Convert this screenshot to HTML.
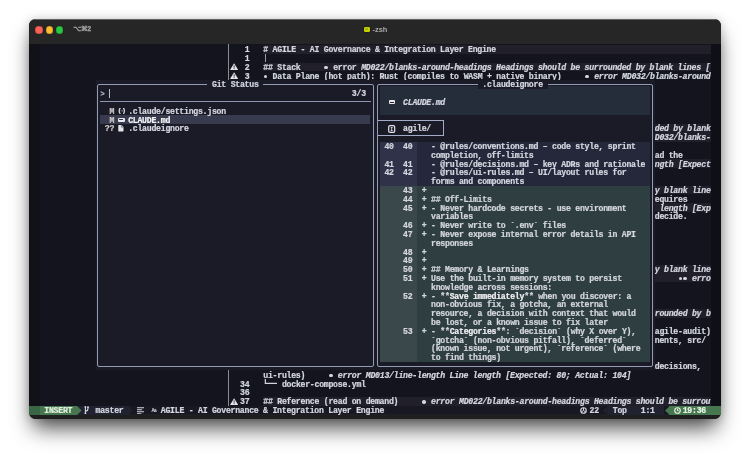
<!DOCTYPE html>
<html lang="en"><head><meta charset="utf-8"><title>-zsh</title>
<style>
html,body{margin:0;padding:0;background:#fff;}
body{width:750px;height:458px;position:relative;overflow:hidden;}
.win{position:absolute;left:29.2px;top:19.4px;width:691.6px;height:399.4px;border-radius:6.5px;background:#13141d;overflow:hidden;}
.shadow{position:absolute;left:29.2px;top:19.4px;width:691.6px;height:399.4px;border-radius:6.5px;box-shadow:0 0 10px rgba(0,0,0,0.17),0 12.5px 21px -4px rgba(0,0,0,0.7);}
.page{will-change:transform;position:absolute;left:-29.2px;top:-19.4px;width:750px;height:458px;}
.tb{position:absolute;left:0;top:0;width:750px;height:44.4px;background:#262627;}
.r{position:absolute;display:block;}
.t{position:absolute;white-space:pre;font-family:"Liberation Mono","DejaVu Sans Mono",monospace;font-size:8.2px;letter-spacing:-0.2608px;line-height:8.8px;height:8.8px;color:#d4d6e0;font-weight:bold;-webkit-text-stroke:0.22px currentColor;}
.i{font-style:italic;}
.b{font-weight:bold;}
.tl{position:absolute;width:7.6px;height:7.6px;border-radius:50%;top:26.2px;box-shadow:inset 0 0 0 0.5px rgba(0,0,0,0.28);}
.ui{position:absolute;font-family:"Liberation Sans","DejaVu Sans",sans-serif;white-space:pre;}
</style></head><body>
<div class="shadow"></div>
<div class="win"><div class="page">
<div class="tb"></div>
<div class="r" style="left:0;top:19.4px;width:750px;height:0.7px;background:rgba(255,255,255,0.28)"></div>
<div class="tl" style="left:35.1px;background:#fe5f57"></div>
<div class="tl" style="left:45.5px;background:#febc2e"></div>
<div class="tl" style="left:55.9px;background:#28c840"></div>
<span class="ui" style="left:73.2px;top:25.3px;font-size:7.1px;line-height:9px;color:#a6a6a6;font-weight:bold;letter-spacing:-0.3px;-webkit-text-stroke:0.25px #a6a6a6">⌥⌘2</span>
<div class="r" style="left:363.6px;top:26.9px;width:6.4px;height:5.2px;border-radius:1.2px;background:#c4d300;box-shadow:0 0 0 0.5px #1a1d00"></div>
<div class="r" style="left:365px;top:28.2px;width:3px;height:1.4px;border-radius:0.4px;background:#a2b000"></div>
<span class="ui" style="left:372.4px;top:25.3px;font-size:7.5px;line-height:9px;color:#a9a9a9;font-weight:bold">-zsh</span>
<div class="r" style="left:263.30px;top:44.90px;width:447.36px;height:8.80px;background:#201f2a;"></div>
<div class="r" style="left:263.30px;top:62.50px;width:447.36px;height:8.80px;background:#201f2a;"></div>
<div class="r" style="left:263.30px;top:124.10px;width:447.36px;height:8.80px;background:#201f2a;"></div>
<div class="r" style="left:263.30px;top:132.90px;width:447.36px;height:8.80px;background:#201f2a;"></div>
<div class="r" style="left:263.30px;top:159.30px;width:447.36px;height:8.80px;background:#201f2a;"></div>
<div class="r" style="left:263.30px;top:185.70px;width:447.36px;height:8.80px;background:#201f2a;"></div>
<div class="r" style="left:263.30px;top:203.30px;width:447.36px;height:8.80px;background:#201f2a;"></div>
<div class="r" style="left:263.30px;top:264.90px;width:447.36px;height:8.80px;background:#201f2a;"></div>
<div class="r" style="left:263.30px;top:273.70px;width:447.36px;height:8.80px;background:#201f2a;"></div>
<div class="r" style="left:263.30px;top:308.90px;width:447.36px;height:8.80px;background:#201f2a;"></div>
<div class="r" style="left:263.30px;top:396.90px;width:447.36px;height:8.80px;background:#201f2a;"></div>
<div class="r" style="left:29.00px;top:44.40px;width:10.62px;height:361.30px;background:#111117;"></div>
<div class="r" style="left:710.66px;top:44.40px;width:10.34px;height:361.30px;background:#0f1017;"></div>
<div class="r" style="left:227.80px;top:44.40px;width:1.10px;height:361.30px;background:#8a8c98;"></div>
<svg class="r" style="left:230.08px;top:63.40px" width="8.2" height="7" viewBox="0 0 76 66"><path d="M38 2 L74 62 Q75 65 72 65 L4 65 Q1 65 2 62 Z" fill="#e4e4ea"/><rect x="34" y="22" width="8" height="22" fill="#13141d"/><rect x="34" y="49" width="8" height="8" fill="#13141d"/></svg>
<svg class="r" style="left:230.08px;top:72.20px" width="8.2" height="7" viewBox="0 0 76 66"><path d="M38 2 L74 62 Q75 65 72 65 L4 65 Q1 65 2 62 Z" fill="#e4e4ea"/><rect x="34" y="22" width="8" height="22" fill="#13141d"/><rect x="34" y="49" width="8" height="8" fill="#13141d"/></svg>
<svg class="r" style="left:230.08px;top:397.80px" width="8.2" height="7" viewBox="0 0 76 66"><path d="M38 2 L74 62 Q75 65 72 65 L4 65 Q1 65 2 62 Z" fill="#e4e4ea"/><rect x="34" y="22" width="8" height="22" fill="#13141d"/><rect x="34" y="49" width="8" height="8" fill="#13141d"/></svg>
<span class="t " style="left:244.66px;top:46.20px;">1</span>
<span class="t " style="left:244.66px;top:55.00px;">1</span>
<span class="t " style="left:244.66px;top:63.80px;">2</span>
<span class="t " style="left:244.66px;top:72.60px;">3</span>
<span class="t " style="left:240.00px;top:380.60px;">34</span>
<span class="t " style="left:240.00px;top:389.40px;">36</span>
<span class="t " style="left:240.00px;top:398.20px;">37</span>
<div class="r" style="left:265.13px;top:54.30px;width:1.00px;height:7.60px;background:#9a9ca8;"></div>
<span class="t " style="left:263.30px;top:46.20px;"># AGILE - AI Governance &amp; Integration Layer Engine</span>
<span class="t " style="left:263.30px;top:63.80px;">## Stack</span>
<div class="r" style="left:324.41px;top:65.70px;width:3.6px;height:3.6px;border-radius:50%;background:#d4d6e0"></div>
<span class="t " style="left:333.20px;top:63.80px;">error </span>
<span class="t i" style="left:361.16px;top:63.80px;">MD022/blanks-around-headings Headings should be surrounded by blank lines [</span>
<div class="r" style="left:263.83px;top:74.50px;width:3.6px;height:3.6px;border-radius:50%;background:#d4d6e0"></div>
<span class="t " style="left:272.62px;top:72.60px;">Data Plane (hot path): Rust (compiles to </span>
<span class="t " style="left:463.68px;top:72.60px;text-decoration:underline wavy #c0506a 0.5px;text-underline-offset:0.5px">WASM</span>
<span class="t " style="left:486.98px;top:72.60px;">+ native binary)</span>
<div class="r" style="left:585.37px;top:74.50px;width:3.6px;height:3.6px;border-radius:50%;background:#d4d6e0"></div>
<span class="t i" style="left:594.16px;top:72.60px;">error </span>
<span class="t i" style="left:622.12px;top:72.60px;">MD032/blanks-around</span>
<span class="t i" style="left:654.74px;top:125.40px;">ded by blank</span>
<span class="t i" style="left:654.74px;top:134.20px;">D032/blanks-</span>
<span class="t " style="left:654.74px;top:151.80px;">ad the</span>
<span class="t i" style="left:654.74px;top:160.60px;">ngth [Expect</span>
<span class="t i" style="left:654.74px;top:187.00px;">y blank line</span>
<span class="t " style="left:654.74px;top:195.80px;">equires</span>
<span class="t i" style="left:654.74px;top:204.60px;"> length [Exp</span>
<span class="t " style="left:654.74px;top:213.40px;">decide.</span>
<span class="t i" style="left:654.74px;top:266.20px;">y blank line</span>
<span class="t i" style="left:654.74px;top:310.20px;">rounded by b</span>
<span class="t " style="left:654.74px;top:327.80px;">agile-audit)</span>
<span class="t " style="left:654.74px;top:336.60px;">nents, src/</span>
<span class="t " style="left:654.74px;top:363.00px;">decisions,</span>
<div class="r" style="left:678.57px;top:276.90px;width:3.6px;height:3.6px;border-radius:50%;background:#d4d6e0"></div>
<div class="r" style="left:683.23px;top:276.90px;width:3.6px;height:3.6px;border-radius:50%;background:#d4d6e0"></div>
<span class="t i" style="left:692.02px;top:275.00px;">erro</span>
<span class="t " style="left:263.30px;top:371.80px;">ui-rules)</span>
<div class="r" style="left:329.07px;top:373.70px;width:3.6px;height:3.6px;border-radius:50%;background:#d4d6e0"></div>
<span class="t i" style="left:337.86px;top:371.80px;">error </span>
<span class="t i" style="left:365.82px;top:371.80px;">MD013/line-length Line length [Expected: 80; Actual: 104]</span>
<svg class="r" style="left:263.30px;top:379.30px" width="13.98" height="8.8" viewBox="0 0 13.98 8.8"><path d="M2.33 0 V4.40 H13.98" stroke="#d4d6e0" stroke-width="1.2" fill="none"/></svg>
<span class="t " style="left:281.94px;top:380.60px;">docker-compose.yml</span>
<span class="t " style="left:263.30px;top:398.20px;">## Reference (read on demand)</span>
<div class="r" style="left:422.27px;top:400.10px;width:3.6px;height:3.6px;border-radius:50%;background:#d4d6e0"></div>
<span class="t i" style="left:431.06px;top:398.20px;">error </span>
<span class="t i" style="left:459.02px;top:398.20px;">MD022/blanks-around-headings Headings should be surrou</span>
<div class="r" style="left:29.00px;top:405.70px;width:692.00px;height:9.00px;background:#171822;"></div>
<div class="r" style="left:29.00px;top:414.40px;width:692.00px;height:6.00px;background:#1f1f22;"></div>
<div class="r" style="left:29.00px;top:405.70px;width:10.62px;height:9.00px;background:#3b6645;"></div>
<div class="r" style="left:39.62px;top:405.70px;width:37.28px;height:9.00px;background:#47774f;"></div>
<div class="r" style="left:76.90px;top:405.70px;width:51.26px;height:9.00px;background:#20222f;"></div>
<svg class="r" style="left:76.90px;top:405.70px" width="4.66" height="9.0" viewBox="0 0 10 10" preserveAspectRatio="none"><path d="M0 0 L10 5 L0 10 Z" fill="#47774f"/></svg>
<svg class="r" style="left:128.16px;top:405.70px" width="4.66" height="9.0" viewBox="0 0 10 10" preserveAspectRatio="none"><path d="M0 0 L10 5 L0 10 Z" fill="#20222f"/></svg>
<span class="t b" style="left:44.28px;top:407.00px;color:#dff0df">INSERT</span>
<svg class="r" style="left:83.96px;top:406.10px" width="5.2" height="8.4" viewBox="0 0 52 84"><path d="M14 8 V76 M14 52 Q40 50 40 24 V10" stroke="#d4d6e0" stroke-width="11" fill="none"/><circle cx="14" cy="10" r="9" fill="#d4d6e0"/><circle cx="14" cy="74" r="9" fill="#d4d6e0"/><circle cx="40" cy="12" r="9" fill="#d4d6e0"/></svg>
<span class="t " style="left:95.54px;top:407.00px;">master</span>
<svg class="r" style="left:136.58px;top:406.70px" width="7" height="7.4" viewBox="0 0 70 74"><path d="M0 7 H70 M0 27 H52 M0 47 H70 M0 67 H44" stroke="#d4d6e0" stroke-width="11" fill="none"/></svg>
<span class="t " style="left:151.46px;top:407.00px;font-size:5.2px;letter-spacing:-0.7px;top:406.60px;-webkit-text-stroke:0;font-family:"Liberation Sans",sans-serif;left:150.86px">Aa</span>
<span class="t " style="left:160.78px;top:407.00px;">AGILE - AI Governance &amp; Integration Layer Engine</span>
<svg class="r" style="left:580.18px;top:407.10px" width="7" height="7" viewBox="0 0 64 64"><circle cx="32" cy="32" r="25" stroke="#d4d6e0" stroke-width="11" fill="none"/><path d="M32 32 V8 M32 32 L12 46 M32 32 L52 46" stroke="#d4d6e0" stroke-width="9" fill="none"/></svg>
<span class="t " style="left:589.50px;top:407.00px;">22</span>
<div class="r" style="left:608.14px;top:405.70px;width:55.92px;height:9.00px;background:#20222f;"></div>
<svg class="r" style="left:603.48px;top:405.70px" width="4.66" height="9.0" viewBox="0 0 10 10" preserveAspectRatio="none"><path d="M10 0 L0 5 L10 10 Z" fill="#20222f"/></svg>
<span class="t " style="left:612.80px;top:407.00px;">Top</span>
<span class="t " style="left:640.76px;top:407.00px;">1:1</span>
<div class="r" style="left:669.32px;top:405.70px;width:51.68px;height:9.00px;background:#47774f;"></div>
<svg class="r" style="left:664.66px;top:405.70px" width="4.66" height="9.0" viewBox="0 0 10 10" preserveAspectRatio="none"><path d="M10 0 L0 5 L10 10 Z" fill="#47774f"/></svg>
<svg class="r" style="left:674.18px;top:406.70px" width="7" height="7" viewBox="0 0 66 66"><circle cx="33" cy="33" r="26" stroke="#e4f2e4" stroke-width="11" fill="none"/><path d="M33 16 V35 H46" stroke="#e4f2e4" stroke-width="9" fill="none"/></svg>
<span class="t b" style="left:682.70px;top:407.00px;color:#e4f2e4">19:36</span>
<div class="r" style="left:95.54px;top:80.10px;width:279.60px;height:290.40px;background:#1a1b27;"></div>
<div class="r" style="left:96.92px;top:83.95px;width:274.94px;height:281.20px;border:1.9px solid #949cb5;border-radius:2px;box-sizing:content-box"></div>
<div class="r" style="left:207.38px;top:80.10px;width:55.92px;height:8.80px;background:#1a1b27;"></div>
<span class="t " style="left:212.04px;top:81.40px;">Git Status</span>
<span class="t " style="left:100.20px;top:90.20px;font-size:7px;color:#b6b8c6;left:100.40px">&gt;</span>
<div class="r" style="left:109.22px;top:88.70px;width:1.00px;height:9.00px;background:#b8bac6;"></div>
<span class="t " style="left:351.84px;top:90.20px;">3/3</span>
<div class="r" style="left:100.20px;top:101.40px;width:270.88px;height:1.10px;background:#8c94ae;"></div>
<div class="r" style="left:100.20px;top:115.30px;width:270.28px;height:8.80px;background:#383a4d;"></div>
<span class="t " style="left:109.52px;top:107.80px;color:#cbc8c6">M</span>
<span class="t " style="left:109.52px;top:116.60px;color:#cbc8c6">M</span>
<span class="t " style="left:104.86px;top:125.40px;color:#cbc8c6">??</span>
<svg class="r" style="left:117.94px;top:108.20px" width="7.6" height="5.8" viewBox="0 0 76 58"><path d="M26 4 Q14 4 14 14 V22 Q14 29 5 29 Q14 29 14 36 V44 Q14 54 26 54" stroke="#d4d6e0" stroke-width="12" fill="none"/><path d="M50 4 Q62 4 62 14 V22 Q62 29 71 29 Q62 29 62 36 V44 Q62 54 50 54" stroke="#d4d6e0" stroke-width="12" fill="none"/><rect x="28" y="25" width="8" height="8" fill="#d4d6e0"/><rect x="40" y="25" width="8" height="8" fill="#d4d6e0"/></svg>
<div class="r" style="left:118.24px;top:117.90px;width:6.4px;height:3.8px;border-radius:1px;background:#e8e8ee"></div>
<div class="r" style="left:119.44px;top:119.20px;width:4px;height:1.2px;background:#383a4d"></div>
<svg class="r" style="left:117.94px;top:125.40px" width="5.8" height="6.4" viewBox="0 0 54 66"><path d="M4 0 H34 L54 20 V62 Q54 66 50 66 H4 Q0 66 0 62 V4 Q0 0 4 0 Z" fill="#e4e4ea"/><path d="M32 2 V22 H52" stroke="#1a1b27" stroke-width="5" fill="none"/></svg>
<span class="t " style="left:128.16px;top:107.80px;">.claude/settings.json</span>
<span class="t b" style="left:128.16px;top:116.60px;color:#f4f4f8">CLAUDE.md</span>
<span class="t " style="left:128.16px;top:125.40px;">.claudeignore</span>
<div class="r" style="left:375.14px;top:80.10px;width:279.60px;height:290.40px;background:#1a1b27;"></div>
<div class="r" style="left:379.80px;top:86.30px;width:270.28px;height:29.00px;background:#252c3a;"></div>
<div class="r" style="left:379.80px;top:141.70px;width:37.28px;height:44.00px;background:#2f3248;"></div>
<div class="r" style="left:417.08px;top:141.70px;width:233.00px;height:44.00px;background:#25273a;"></div>
<div class="r" style="left:379.80px;top:185.70px;width:37.28px;height:176.00px;background:#3a484c;"></div>
<div class="r" style="left:417.08px;top:185.70px;width:233.00px;height:176.00px;background:#2f3f41;"></div>
<div class="r" style="left:376.52px;top:83.95px;width:274.94px;height:281.20px;border:1.9px solid #949cb5;border-radius:2px;box-sizing:content-box"></div>
<div class="r" style="left:477.66px;top:80.10px;width:69.90px;height:8.80px;background:#1a1b27;"></div>
<span class="t " style="left:482.32px;top:81.40px;">.claudeignore</span>
<div class="r" style="left:388.72px;top:100.30px;width:6.4px;height:3.8px;border-radius:1px;background:#e8e8ee"></div>
<div class="r" style="left:389.92px;top:101.60px;width:4px;height:1.2px;background:#242838"></div>
<span class="t i" style="left:403.10px;top:99.00px;">CLAUDE.md</span>
<div class="r" style="left:377.80px;top:119.65px;width:65.51px;height:14.70px;border:1.5px solid #a3abc8;border-left:none;box-sizing:content-box"></div>
<svg class="r" style="left:388.12px;top:124.60px" width="7.4" height="8" viewBox="0 0 74 80"><rect x="7" y="7" width="60" height="66" rx="14" stroke="#e4e4ea" stroke-width="12" fill="none"/><path d="M27 26 H47 M37 26 V56 M27 56 H47" stroke="#e4e4ea" stroke-width="9" fill="none"/></svg>
<span class="t " style="left:403.10px;top:125.40px;">agile/</span>
<span class="t " style="left:384.46px;top:143.00px;">40</span>
<span class="t " style="left:403.10px;top:143.00px;">40</span>
<span class="t " style="left:431.06px;top:143.00px;">- @rules/conventions.md – code style, sprint</span>
<span class="t " style="left:431.06px;top:151.80px;">completion, off-limits</span>
<span class="t " style="left:384.46px;top:160.60px;">41</span>
<span class="t " style="left:403.10px;top:160.60px;">41</span>
<span class="t " style="left:431.06px;top:160.60px;">- @rules/decisions.md – key ADRs and rationale</span>
<span class="t " style="left:384.46px;top:169.40px;">42</span>
<span class="t " style="left:403.10px;top:169.40px;">42</span>
<span class="t " style="left:431.06px;top:169.40px;">- @rules/ui-rules.md – UI/layout rules for</span>
<span class="t " style="left:431.06px;top:178.20px;">forms and components</span>
<span class="t " style="left:403.10px;top:187.00px;">43</span>
<span class="t " style="left:421.74px;top:187.00px;">+</span>
<span class="t " style="left:403.10px;top:195.80px;">44</span>
<span class="t " style="left:421.74px;top:195.80px;">+</span>
<span class="t " style="left:431.06px;top:195.80px;">## Off-Limits</span>
<span class="t " style="left:403.10px;top:204.60px;">45</span>
<span class="t " style="left:421.74px;top:204.60px;">+</span>
<span class="t " style="left:431.06px;top:204.60px;">- Never hardcode secrets - use environment</span>
<span class="t " style="left:431.06px;top:213.40px;">variables</span>
<span class="t " style="left:403.10px;top:222.20px;">46</span>
<span class="t " style="left:421.74px;top:222.20px;">+</span>
<span class="t " style="left:431.06px;top:222.20px;">- Never write to `.env` files</span>
<span class="t " style="left:403.10px;top:231.00px;">47</span>
<span class="t " style="left:421.74px;top:231.00px;">+</span>
<span class="t " style="left:431.06px;top:231.00px;">- Never expose internal error details in API</span>
<span class="t " style="left:431.06px;top:239.80px;">responses</span>
<span class="t " style="left:403.10px;top:248.60px;">48</span>
<span class="t " style="left:421.74px;top:248.60px;">+</span>
<span class="t " style="left:403.10px;top:257.40px;">49</span>
<span class="t " style="left:421.74px;top:257.40px;">+</span>
<span class="t " style="left:403.10px;top:266.20px;">50</span>
<span class="t " style="left:421.74px;top:266.20px;">+</span>
<span class="t " style="left:431.06px;top:266.20px;">## Memory &amp; Learnings</span>
<span class="t " style="left:403.10px;top:275.00px;">51</span>
<span class="t " style="left:421.74px;top:275.00px;">+</span>
<span class="t " style="left:431.06px;top:275.00px;">Use the built-in memory system to persist</span>
<span class="t " style="left:431.06px;top:283.80px;">knowledge across sessions:</span>
<span class="t " style="left:403.10px;top:292.60px;">52</span>
<span class="t " style="left:421.74px;top:292.60px;">+</span>
<span class="t " style="left:431.06px;top:301.40px;">non-obvious fix, a gotcha, an external</span>
<span class="t " style="left:431.06px;top:310.20px;">resource, a decision with context that would</span>
<span class="t " style="left:431.06px;top:319.00px;">be lost, or a known issue to fix later</span>
<span class="t " style="left:403.10px;top:327.80px;">53</span>
<span class="t " style="left:421.74px;top:327.80px;">+</span>
<span class="t " style="left:431.06px;top:336.60px;">`gotcha` (non-obvious pitfall), `deferred`</span>
<span class="t " style="left:431.06px;top:345.40px;">(known issue, not urgent), `reference` (where</span>
<span class="t " style="left:431.06px;top:354.20px;">to find things)</span>
<span class="t " style="left:431.06px;top:292.60px;">- **</span>
<span class="t b" style="left:449.70px;top:292.60px;color:#f0f0f4">Save immediately</span>
<span class="t " style="left:524.26px;top:292.60px;">** when you discover: a</span>
<span class="t " style="left:431.06px;top:327.80px;">- **</span>
<span class="t b" style="left:449.70px;top:327.80px;color:#f0f0f4">Categories</span>
<span class="t " style="left:496.30px;top:327.80px;">**: `decision` (why X over Y),</span>
</div></div>
</body></html>
